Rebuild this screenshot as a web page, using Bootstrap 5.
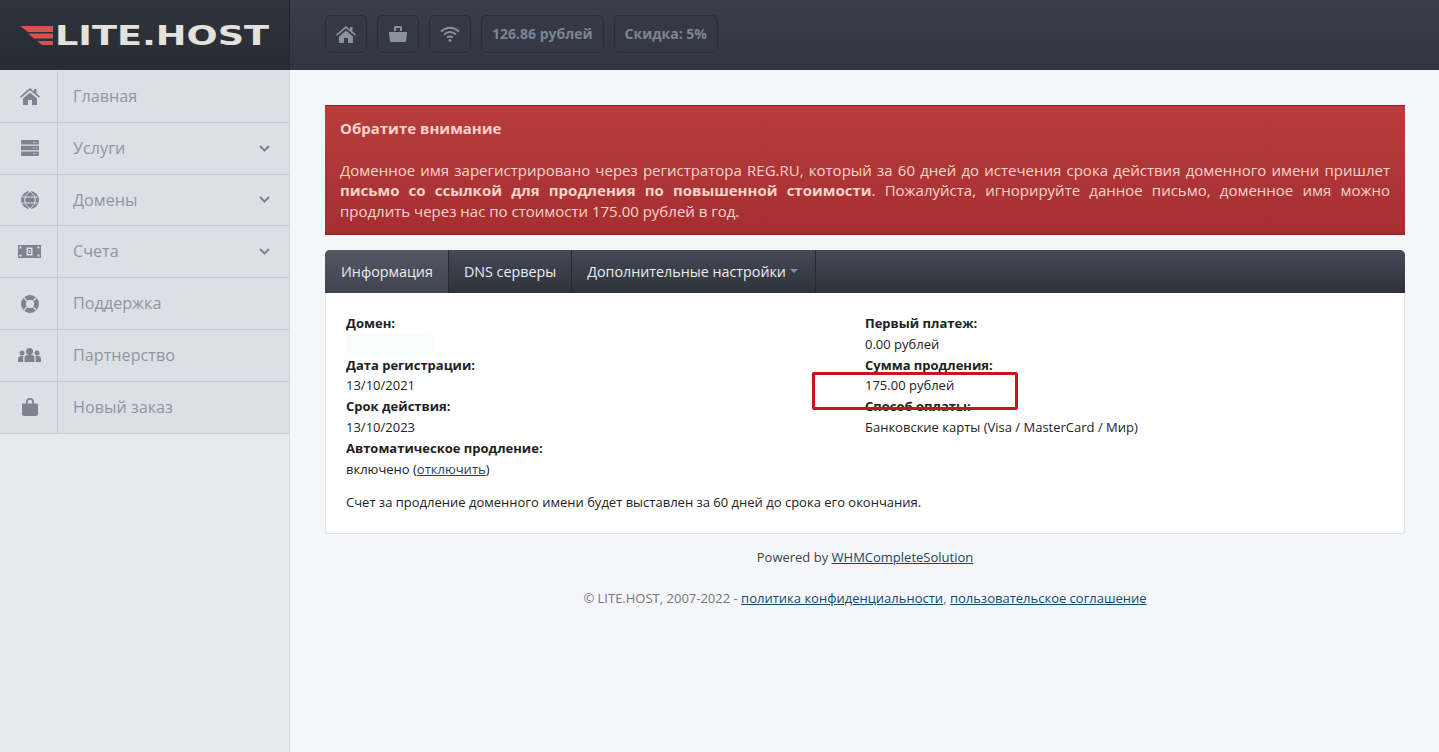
<!DOCTYPE html>
<html lang="ru"><head><meta charset="utf-8"><title>LITE.HOST</title>
<link href="https://cdn.jsdelivr.net/npm/bootstrap@5.3.0/dist/css/bootstrap.min.css" rel="stylesheet">
<style>
html,body{height:100%;overflow:hidden}
body{background:#f4f6fa;font-family:"Open Sans","Noto Sans",sans-serif;font-size:13px;line-height:20.8px;color:#222;width:1439px}
.shell{height:752px}
.top-strip{height:70px;background:linear-gradient(#393e49,#30353f)}
.logo-box{width:290px;height:70px;background:linear-gradient(#30343d,#272b33);flex:none;border-right:1px solid #23262d}
.logo-box svg{display:block;margin:20px 0 0 19px}
.logo-word{font-family:"DejaVu Sans",sans-serif;font-weight:700;font-size:26px;fill:#e4e2db}
.tool-row{padding:15px 0 0 35px;gap:10px}
.tool-btn{height:38px;border:1px solid #2a2e37;border-radius:5px;background:#343944;color:#7c8594;font-weight:700;font-size:14px;display:flex;align-items:center;justify-content:center;padding:0 10px;box-shadow:0 1px 0 rgba(255,255,255,.05)}
.tool-sq{width:42px;padding:0}
.body-row{height:682px}
.side-col{width:290px;flex:none;background:#e8eaee;border-right:1px solid #d5d8de}
.side-link{height:51.8px;display:flex;align-items:center;background:#dcdfe6;border-bottom:1px solid #c6c9d1;color:#8f96a1;font-size:16.2px;text-decoration:none}
.side-link:first-child{height:52.8px;padding-top:1px}
.side-ico{width:58px;height:100%;flex:none;border-right:1px solid #c6c9d1;display:flex;align-items:center;justify-content:center;padding-left:2px}
.side-ico svg{fill:#7d8490}
.side-txt{padding-left:15px;flex:1}
.side-chev{margin-right:19px}
.main-col{padding:35px 34px 0 35px;flex:1;min-width:0}
.warn-box{height:130px;background:linear-gradient(#b83e3d,#a62e2f);border-top:1px solid #8d2424;border-bottom:1px solid #8d2424;color:#f8d4cd;font-size:15px;line-height:20.6px;padding:12px 15px;text-align:justify;margin-bottom:15px}
.warn-box p{margin:0}
.warn-title{font-weight:700;margin-bottom:21px!important}
.tab-bar{height:43px;background:linear-gradient(#454a55,#2e323b);border-radius:5px 5px 0 0;overflow:hidden}
.tab-item{height:100%;display:flex;align-items:center;padding:1px 15px 0 15px;color:#ecedef;font-size:14.3px;border-right:1px solid #272a31;text-decoration:none}
.tab-on{background:linear-gradient(#535863,#3f444e);padding:1px 15px 0 16px}
.tab-last{padding-right:17px}
.tab-caret{display:inline-block;margin-left:4px;margin-top:-2px;border-top:4px solid #8a8f99;border-left:4px solid transparent;border-right:4px solid transparent}
.info-panel{height:241px;background:#fff;border:1px solid #dfe2e8;border-top:0;border-radius:0 0 4px 4px;padding:20px 20px 0;position:relative}
.info-left{width:519px}
.info-panel a,.foot-zone a{color:#16486b}
.domain-blur{height:20.8px;width:88px;background:#f8fdfd;border-radius:8px}
.renew-note{margin:13px 0 0}
.red-mark{position:absolute;left:486px;top:79px;width:206px;height:38px;border:3px solid #c8141b;border-radius:2px}
.foot-zone{text-align:center;color:#444;padding-top:13px}
.foot-copy{color:#777;margin-top:20px}
</style></head><body>
<div class="shell d-flex flex-column">
<header class="top-strip d-flex">
 <div class="logo-box">
  <svg width="255" height="30" viewBox="0 0 255 30" role="img" aria-label="LITE.HOST">
   <polygon fill="#d9504f" points="1,6 34,6 34,12 9,12"/><polygon fill="#d9504f" points="9,13.500 34,13.500 34,18.500 15,18.500"/><polygon fill="#d9504f" points="18,21 34,21 34,25 23,25"/>
   <text class="logo-word" x="36" y="25" textLength="214" lengthAdjust="spacingAndGlyphs">LITE.HOST</text>
  </svg>
 </div>
 <div class="tool-row d-flex">
  <div class="tool-btn tool-sq"><svg width="20" height="17" viewBox="0 0 20 17"><path fill="#8a92a0" d="M10 0 0 8.500l1 1.300L10 2.300l9 7.500 1-1.300-3.500-3V1h-2.500v2.400zM3 10.500V17h5v-5h4v5h5v-6.500L10 4.500z"/></svg></div>
  <div class="tool-btn tool-sq"><svg width="18" height="16" viewBox="0 0 18 16"><path fill="#8a92a0" d="M5 1.500Q5 0 6.500 0h5Q13 0 13 1.500V5h-2V2H7v3H5zM0 6h18v2l-1 7q0 1-1 1H2q-1 0-1-1L0 8z"/></svg></div>
  <div class="tool-btn tool-sq"><svg width="20" height="16" viewBox="0 0 20 16" fill="none" stroke="#8a92a0" stroke-width="2"><path d="M1 5.500Q10-2 19 5.500M4 8.500Q10 3.500 16 8.500M7 11.500q3-2 6 0"/><circle cx="10" cy="14.500" r="1.400" fill="#8a92a0" stroke="none"/></svg></div>
  <div class="tool-btn">126.86 рублей</div>
  <div class="tool-btn">Скидка: 5%</div>
 </div>
</header>
<div class="body-row d-flex">
 <nav class="side-col">
  <a class="side-link" href="#"><span class="side-ico"><svg width="20" height="17" viewBox="0 0 20 17"><path d="M10 0 0 8.500l1 1.300L10 2.300l9 7.500 1-1.300-3.500-3V1h-2.500v2.400zM3 10.500V17h5v-5h4v5h5v-6.500L10 4.500z"/></svg></span><span class="side-txt">Главная</span></a>
  <a class="side-link" href="#"><span class="side-ico"><svg width="18" height="16" viewBox="0 0 18 16"><path d="M0 1q0-1 1-1h16q1 0 1 1v3.500H0zM0 5.700h18v4.500H0zM0 11.400h18V15q0 1-1 1H1q-1 0-1-1z"/><path fill="#dcdfe6" d="M12 2h1.500v1H12zM15 2h1v1h-1zM12 7.500h1.500v1H12zM15 7.500h1v1h-1zM12 13.200h1.500v1H12zM15 13.200h1v1h-1z"/></svg></span><span class="side-txt">Услуги</span><svg class="side-chev" width="11" height="7" viewBox="0 0 11 7"><path fill="none" stroke="#7d8490" stroke-width="2" d="m1 1 4.500 4.500L10 1"/></svg></a>
  <a class="side-link" href="#"><span class="side-ico"><svg width="18" height="18" viewBox="0 0 18 18"><circle cx="9" cy="9" r="9"/><path fill="none" stroke="#dcdfe6" stroke-width="1" d="M9 0Q3.500 4.500 3.500 9T9 18M9 0q5.500 4.500 5.500 9T9 18M1 6h16M1 12h16"/></svg></span><span class="side-txt">Домены</span><svg class="side-chev" width="11" height="7" viewBox="0 0 11 7"><path fill="none" stroke="#7d8490" stroke-width="2" d="m1 1 4.500 4.500L10 1"/></svg></a>
  <a class="side-link" href="#"><span class="side-ico"><svg width="23" height="13" viewBox="0 0 23 13"><rect width="23" height="13"/><path fill="#dcdfe6" d="M8.500 2.500h6v8h-6zM1.500 1.500h2v2h-2zM19.500 1.500h2v2h-2zM1.500 9.500h2v2h-2zM19.500 9.500h2v2h-2z"/><rect x="10.500" y="4.500" width="2" height="4" fill="none" stroke="#7d8490"/></svg></span><span class="side-txt">Счета</span><svg class="side-chev" width="11" height="7" viewBox="0 0 11 7"><path fill="none" stroke="#7d8490" stroke-width="2" d="m1 1 4.500 4.500L10 1"/></svg></a>
  <a class="side-link" href="#"><span class="side-ico"><svg width="18" height="18" viewBox="0 0 18 18"><path fill-rule="evenodd" d="M9 0a9 9 0 1 0 0 18A9 9 0 0 0 9 0zM9 5a4 4 0 1 1 0 8 4 4 0 0 1 0-8z"/><path fill="none" stroke="#dcdfe6" stroke-width="1.200" d="M3 3l3 3M15 3l-3 3M3 15l3-3M15 15l-3-3"/></svg></span><span class="side-txt">Поддержка</span></a>
  <a class="side-link" href="#"><span class="side-ico"><svg width="23" height="14" viewBox="0 0 23 14"><circle cx="11.500" cy="3.500" r="3.500"/><circle cx="4" cy="5" r="2.500"/><circle cx="19" cy="5" r="2.500"/><path d="M6.500 14V10q0-3 3-3h4q3 0 3 3v4zM0 14v-3q0-3 3-3h2.500Q5.200 9 5.200 10v4zM23 14v-3q0-3-3-3h-2.500q.3 1 .3 2v4z"/></svg></span><span class="side-txt">Партнерство</span></a>
  <a class="side-link" href="#"><span class="side-ico"><svg width="16" height="18" viewBox="0 0 16 18"><path d="M4 6V4a4 4 0 0 1 8 0v2h-1.800V4a2.200 2.200 0 0 0-4.400 0v2zM1 5.500h14a1 1 0 0 1 1 1V16a2 2 0 0 1-2 2H2a2 2 0 0 1-2-2V6.500a1 1 0 0 1 1-1z"/></svg></span><span class="side-txt">Новый заказ</span></a>
 </nav>
 <main class="main-col">
  <div class="warn-box">
   <p class="warn-title">Обратите внимание</p>
   <p>Доменное имя зарегистрировано через регистратора REG.RU, который за 60 дней до истечения срока действия доменного имени пришлет <b>письмо со ссылкой для продления по повышенной стоимости</b>. Пожалуйста, игнорируйте данное письмо, доменное имя можно продлить через нас по стоимости 175.00 рублей в год.</p>
  </div>
  <div class="tab-bar d-flex">
   <a class="tab-item tab-on" href="#">Информация</a>
   <a class="tab-item" href="#">DNS серверы</a>
   <a class="tab-item tab-last" href="#">Дополнительные настройки<span class="tab-caret"></span></a>
  </div>
  <div class="info-panel">
   <div class="d-flex">
    <div class="info-left">
     <div class="fw-bold">Домен:</div><div class="domain-blur"></div>
     <div class="fw-bold">Дата регистрации:</div><div>13/10/2021</div>
     <div class="fw-bold">Срок действия:</div><div>13/10/2023</div>
     <div class="fw-bold">Автоматическое продление:</div><div>включено (<a href="#">отключить</a>)</div>
    </div>
    <div>
     <div class="fw-bold">Первый платеж:</div><div>0.00 рублей</div>
     <div class="fw-bold">Сумма продления:</div><div>175.00 рублей</div>
     <div class="fw-bold">Способ оплаты:</div><div>Банковские карты (Visa / MasterCard / Мир)</div>
    </div>
   </div>
   <p class="renew-note">Счет за продление доменного имени будет выставлен за 60 дней до срока его окончания.</p>
   <div class="red-mark"></div>
  </div>
  <div class="foot-zone">
   <div>Powered by <a href="#">WHMCompleteSolution</a></div>
   <div class="foot-copy">© LITE.HOST, 2007-2022 - <a href="#">политика конфиденциальности</a>, <a href="#">пользовательское соглашение</a></div>
  </div>
 </main>
</div>
</div>
</body></html>
